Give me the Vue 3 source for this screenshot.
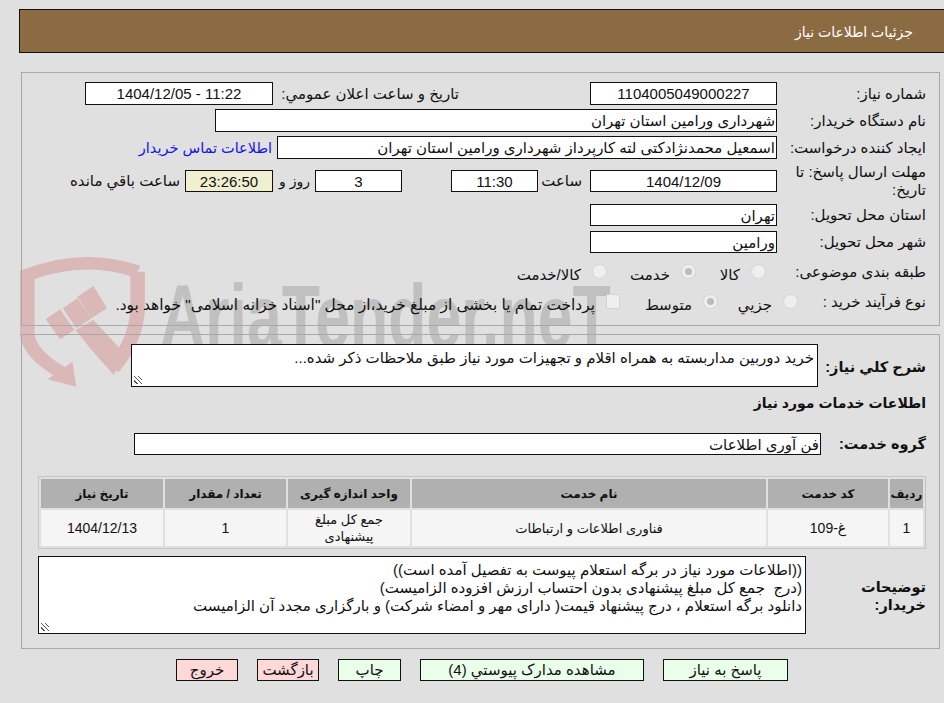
<script setup>
const rows = [{ n: '1', code: 'غ-109', name: 'فناوری اطلاعات و ارتباطات', unit: 'جمع کل مبلغ پیشنهادی', qty: '1', date: '1404/12/13' }]
</script>

<template>
  <div class="page" dir="rtl">
    <svg class="mark" viewBox="0 0 620 160" aria-hidden="true">
      <g transform="scale(0.383 0.3333)" fill="#dab8b8">
        <path d="M320 95Q180 40 32 105V285Q40 345 125 400M320 95V215Q312 310 255 385" fill="none" stroke="#dab8b8" stroke-width="38"/>
        <polygon points="150,365 160,440 85,418"/>
        <polygon points="80,238 118,208 155,270 118,298"/>
        <polygon points="125,205 163,175 200,235 160,265"/>
        <polygon points="163,170 205,138 240,205 200,235"/>
        <polygon points="158,270 205,240 285,340 258,405 200,330"/>
      </g>
      <text class="mark-text" transform="translate(145 107) scale(0.703 1)">AriaTender.neT</text>
    </svg>
    <header class="head">جزئیات اطلاعات نیاز</header>

    <section class="panel top">
      <div class="row r1">
        <label class="lab">شماره نیاز:</label><div class="box num">1104005049000227</div>
        <label class="lab2">تاریخ و ساعت اعلان عمومي:</label><div class="box num w188">11:22 - 1404/12/05</div>
      </div>
      <div class="row r1">
        <label class="lab">نام دستگاه خریدار:</label><div class="box wide1">شهرداری ورامین استان تهران</div>
      </div>
      <div class="row r1">
        <label class="lab">ایجاد کننده درخواست:</label><div class="box wide2">اسمعیل محمدنژادکتی لته کارپرداز شهرداری ورامین استان تهران</div>
        <a class="link">اطلاعات تماس خریدار</a>
      </div>
      <div class="row r4">
        <label class="lab">مهلت ارسال پاسخ: تا تاریخ:</label><div class="box num">1404/12/09</div>
        <span class="t m-s">ساعت</span><div class="box num w87">11:30</div>
        <div class="box num w87 day">3</div><span class="t t-day">روز و</span>
        <div class="box num w88 timer">23:26:50</div><span class="t">ساعت باقي مانده</span>
      </div>
      <div class="row r5">
        <label class="lab">استان محل تحویل:</label><div class="box">تهران</div>
      </div>
      <div class="row r6">
        <label class="lab">شهر محل تحویل:</label><div class="box">ورامین</div>
      </div>
      <div class="row r7">
        <label class="lab">طبقه بندی موضوعی:</label>
        <span class="radio first"></span><span class="opt w44">کالا</span>
        <span class="radio on"></span><span class="opt w63">خدمت</span>
        <span class="radio"></span><span class="opt">کالا/خدمت</span>
      </div>
      <div class="row r8">
        <label class="lab nar">نوع فرآیند خرید :</label>
        <span class="radio"></span><span class="opt w54">جزيي</span>
        <span class="radio on"></span><span class="opt w72">متوسط</span>
        <span class="check"></span><span class="opt long">پرداخت تمام یا بخشی از مبلغ خرید،از محل "اسناد خزانه اسلامی" خواهد بود.</span>
      </div>
    </section>

    <section class="panel bottom">
      <div class="row desc">
        <label class="blab">شرح کلي نیاز:</label>
        <div class="area a1">خرید دوربین مداربسته به همراه اقلام و تجهیزات مورد نیاز طبق ملاحظات ذکر شده...</div>
      </div>
      <h3 class="title">اطلاعات خدمات مورد نیاز</h3>
      <div class="row grp">
        <label class="blab">گروه خدمت:</label>
        <div class="box gbox">فن آوری اطلاعات</div>
      </div>
      <table class="tbl">
        <thead>
          <tr><th class="c1">ردیف</th><th class="c2">کد خدمت</th><th class="c3">نام خدمت</th><th class="c4">واحد اندازه گیری</th><th class="c5">تعداد / مقدار</th><th class="c6">تاریخ نیاز</th></tr>
        </thead>
        <tbody>
          <tr v-for="r in rows" :key="r.n"><td class="n">{{ r.n }}</td><td class="n">{{ r.code }}</td><td>{{ r.name }}</td><td class="u">{{ r.unit }}</td><td class="n">{{ r.qty }}</td><td class="n">{{ r.date }}</td></tr>
        </tbody>
      </table>
      <div class="row notes">
        <label class="blab nlab">توضیحات<br>خریدار:</label>
        <div class="area a2">((اطلاعات مورد نیاز در برگه استعلام پیوست به تفصیل آمده است))<br>(درج&nbsp; جمع کل مبلغ پیشنهادی بدون احتساب ارزش افزوده الزامیست)<br>دانلود برگه استعلام ، درج پیشنهاد قیمت( دارای مهر و امضاء شرکت) و بارگزاری مجدد آن الزامیست</div>
      </div>
    </section>

    <nav class="btns">
      <button class="ok b1">پاسخ به نیاز</button>
      <button class="ok b2">مشاهده مدارک پیوستي (4)</button>
      <button class="ok b3">چاپ</button>
      <button class="no b4">بازگشت</button>
      <button class="no b4">خروج</button>
    </nav>
  </div>
</template>

<style scoped>
.page { position: relative; width: 944px; height: 703px; background: #e0e0e0; font: 15px/18px "Liberation Sans", "DejaVu Sans", sans-serif; color: #111; overflow: hidden; padding-top: 9px; box-sizing: border-box; }
.head { height: 44px; width: 925px; margin-left: 19px; box-sizing: border-box; background: #8b6b42; border: 1px solid #111; border-right: 0; color: #fff; padding: 13px 31px 0 0; font-size: 14px; }
.panel { width: 919px; margin: 0 4px 0 21px; box-sizing: border-box; border: 1px solid #a8a8a8; position: relative; }
.top { height: 254px; margin-top: 19px; padding: 9px 13px 0 0; }
.bottom { height: 315px; margin-top: 8px; padding: 9px 13px 0 0; }
.mark { position: absolute; left: 15px; top: 240px; width: 620px; height: 160px; direction: ltr; }
.mark-text { font: 700 89px "Liberation Sans", sans-serif; fill: #c0c0c0; direction: ltr; text-anchor: start; }
.row { display: flex; align-items: center; position: relative; }
.r1 { height: 23px; margin-bottom: 4px; }
.r4 { height: 22px; margin: 11px 0 12px; }
.r5 { height: 22px; margin-bottom: 5px; }
.r6 { height: 22px; }
.r7 { height: 24px; margin-top: 7px; }
.r8 { height: 24px; margin-top: 6px; }
.lab { width: 149px; flex: none; line-height: 18px; }
.lab.nar { width: 128px; }
.box { width: 187px; height: 100%; flex: none; box-sizing: border-box; background: #fff; border: 1px solid #111; line-height: 21px; padding: 0 1px; white-space: nowrap; overflow: hidden; }
.num { text-align: center; }
.lab2 { margin-right: 131px; width: 182px; flex: none; white-space: nowrap; }
.lab2 + .box { margin-right: 4px; }
.w188 { width: 188px; }
.wide1 { width: 562px; }
.wide2 { width: 500px; }
.link { color: #1414e6; margin-right: 5px; font-size: 14.5px; white-space: nowrap; }
.t { margin: 0 5px; white-space: nowrap; }
.m-s { margin: 0 8px 0 5px; width: 39px; }
.w87 { width: 87px; }
.w88 { width: 88px; }
.day { margin-right: 49px; }
.t-day { width: 28px; margin-left: 9px; font-size: 14px; }
.timer { background: #f0f0d0; }
.radio { width: 15px; height: 15px; flex: none; border-radius: 50%; background: #efefef; border: 1px solid #d4d4d4; box-sizing: border-box; margin-left: 11px; margin-bottom: 2px; position: relative; }
.radio.first { margin-right: 11px; }
.radio.on::after { content: ""; position: absolute; inset: 3px; border-radius: 50%; background: #bbb; }
.check { width: 14px; height: 15px; flex: none; border-radius: 2px; background: #efefef; border: 1px solid #d4d4d4; box-sizing: border-box; margin-left: 11px; margin-bottom: 2px; }
.opt { white-space: nowrap; padding-top: 5px; }
.long { font-size: 15.4px; }
.w44 { width: 44px; }
.w63 { width: 63px; }
.w54 { width: 54px; }
.w72 { width: 72px; }
.desc { height: 43px; align-items: flex-start; }
.blab { font-weight: 700; width: 108px; flex: none; font-size: 14.5px; padding-top: 14px; white-space: nowrap; }
.area { background: #fff; border: 1px solid #111; box-sizing: border-box; position: relative; padding: 4px 3px; line-height: 18px; white-space: nowrap; overflow: hidden; }
.a1 { width: 687px; height: 43px; }
.a1::after, .a2::after { content: ""; position: absolute; left: 2px; bottom: 2px; width: 8px; height: 8px; background: repeating-linear-gradient(45deg, transparent 0 2px, #555 2px 3px); }
.a2 { width: 768px; height: 78px; }
.title { margin: 6px 0 0; font-size: 14px; line-height: 20px; height: 20px; }
.grp { margin-top: 20px; height: 22px; }
.grp .blab { padding: 0; width: 105px; }
.gbox { width: 687px; }
.tbl { width: 888px; margin: 21px 0 0; box-sizing: border-box; border-collapse: separate; border-spacing: 2px; border: 1px solid #c4c4c4; background: #e0e0e0; table-layout: fixed; font-size: 13px; }
.tbl th { background: #b0b0b0; height: 29px; padding: 0; font-size: 12px; }
.tbl td { background: #f5f5f5; height: 36px; padding: 0; text-align: center; line-height: 17px; }
.tbl td.n { font-size: 14px; }
.tbl td.u { padding: 0 16px; }
.c1 { width: 33px; } .c2 { width: 120px; } .c3 { width: 354px; } .c4 { width: 122px; } .c5 { width: 121px; } .c6 { width: 122px; }
.notes { margin-top: 7px; height: 78px; align-items: flex-start; }
.nlab { width: 120px; white-space: normal; padding-top: 22px; line-height: 18px; }
.btns { display: flex; padding: 10px 156px 0 0; gap: 19px; position: relative; }
button { font: 15px "Liberation Sans", "DejaVu Sans", sans-serif; height: 22px; padding: 0; box-sizing: border-box; border: 1px solid #111; color: #111; white-space: nowrap; overflow: hidden; }
.ok { background: #eaffea; }
.no { background: #ffd8d8; }
.b1 { width: 125px; }
.b2 { width: 224px; }
.b3 { width: 63px; }
.b4 { width: 62px; }
</style>

<style>
html, body { margin: 0; background: #e0e0e0; }
</style>
